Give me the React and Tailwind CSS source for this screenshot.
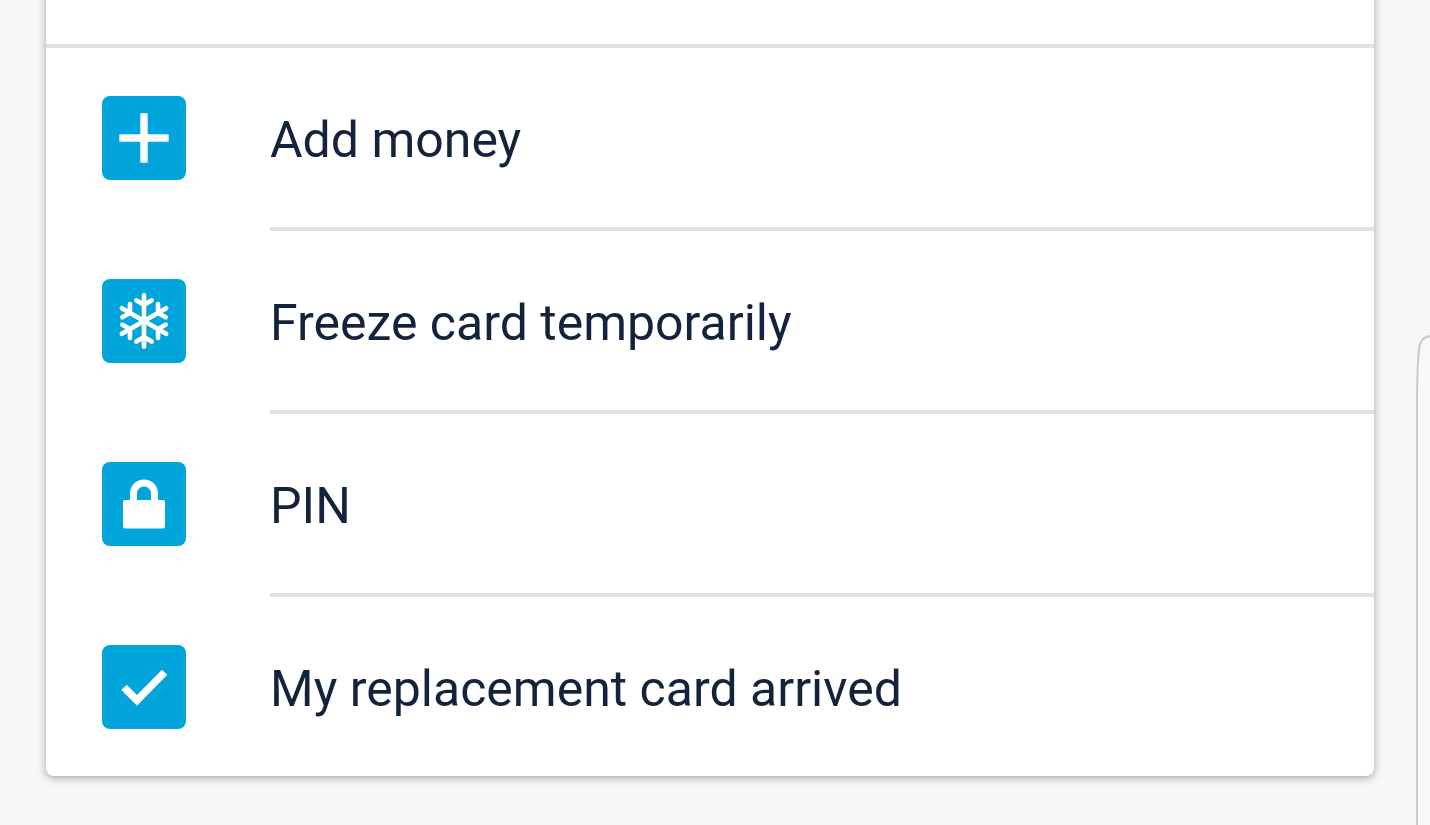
function PlusIcon() {
  return <path fill="#fff" d="M38.3 17.3h7.4v21h21v7.4h-21v21h-7.4v-21h-21v-7.4h21z" />;
}

function SnowflakeIcon() {
  return (
    <g fill="none" stroke="#fff" strokeWidth="4.6" strokeLinecap="round">
      {[0, 60, 120, 180, 240, 300].map((angle) => (
        <path key={angle} transform={`rotate(${angle} 42 42)`} d="M42 42V16.4M34.4 21.400L42 25.800l7.600-4.400" />
      ))}
    </g>
  );
}

function LockIcon() {
  return (
    <>
      <path fill="none" stroke="#fff" strokeWidth="7" d="M31.5 40v-8.500a10.500 10.500 0 0 1 21 0V40" />
      <rect fill="#fff" x="21" y="38" width="42" height="28.500" rx="2" />
    </>
  );
}

function CheckIcon() {
  return <path fill="#fff" d="M19.300 45l5.400-5.300L35 50l25-25.300 5.300 5L35 60.700z" />;
}

const actions = [
  { label: "Add money", Icon: PlusIcon },
  { label: "Freeze card temporarily", Icon: SnowflakeIcon },
  { label: "PIN", Icon: LockIcon },
  { label: "My replacement card arrived", Icon: CheckIcon },
];

export default function App() {
  return (
    <div className="relative min-h-screen overflow-hidden bg-[#f7f7f7] pr-14 pb-12 pl-[46px] font-[Roboto,sans-serif] text-[#14233c]">
      <main className="-mt-4 rounded-b-lg bg-white shadow-[0_2px_8px_rgba(0,0,0,0.35)]">
        <div className="h-16 border-b-4 border-[#e2e2e4]" />
        <ul>
          {actions.map(({ label, Icon }) => (
            <li key={label} className="group">
              <button type="button" className="flex w-full cursor-pointer items-stretch gap-[84px] pl-14 text-left">
                <svg viewBox="0 0 84 84" aria-hidden="true" className="mt-12 size-[84px] shrink-0 rounded-lg bg-[#02a4dc]">
                  <Icon />
                </svg>
                <span className="flex-1 border-b-4 border-[#e2e2e2] pt-[62px] pb-[57px] text-[50px] leading-[60px] group-last:border-b-0">
                  {label}
                </span>
              </button>
            </li>
          ))}
        </ul>
      </main>
      <svg
        aria-hidden="true"
        className="absolute top-[334px] right-0 bottom-0 h-[calc(100%-334px)] w-4"
        viewBox="0 0 16 491"
        preserveAspectRatio="xMinYMin slice"
      >
        <path fill="#f8f8f8" stroke="#c8c8c8" strokeWidth="2" d="M18 2C10 2 6 7 5 15C3.500 30 3 45 3 72V2000H18" />
      </svg>
    </div>
  );
}
